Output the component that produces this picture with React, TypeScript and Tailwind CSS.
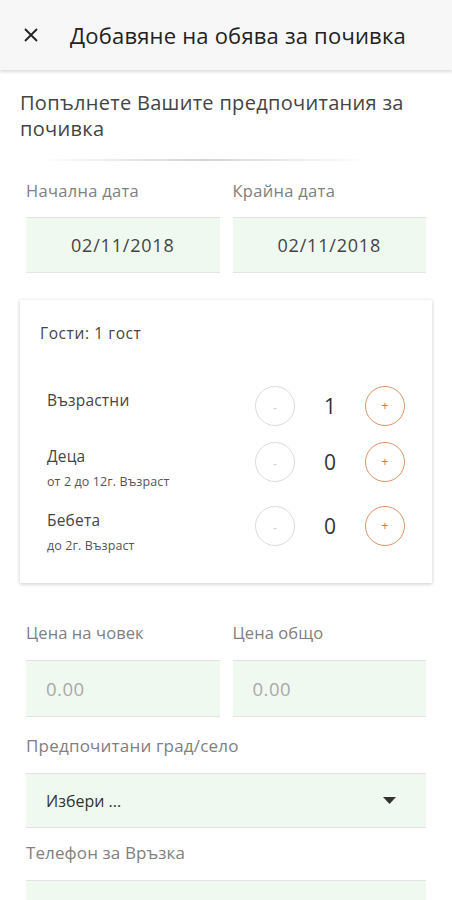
import React from "react";

function Counter({ value }: { value: number }) {
  return (
    <div className="flex items-center">
      <div className="w-[40px] h-[40px] rounded-full border border-[#dcdcdc] flex items-center justify-center text-[11px] text-[#c8c8c8] leading-none">
        -
      </div>
      <div className="w-[70px] text-center text-[21px] text-[#333] leading-none">{value}</div>
      <div className="w-[40px] h-[40px] rounded-full border-[1.5px] border-[#d9956a] flex items-center justify-center text-[12px] text-[#c87a45] leading-none">
        +
      </div>
    </div>
  );
}

function Row({ label, sub, value }: { label: string; sub?: string; value: number }) {
  return (
    <div className="flex items-start justify-between pl-[27px] pr-[27px]">
      <div className="pt-[4px]">
        <div className="text-[15.5px] leading-[20px] text-[#444] tracking-[0.2px]">{label}</div>
        {sub && <div className="mt-[8px] text-[12.5px] leading-[16px] text-[#555] tracking-[0.1px]">{sub}</div>}
      </div>
      <Counter value={value} />
    </div>
  );
}

function Field({ children, className = "" }: { children?: React.ReactNode; className?: string }) {
  return (
    <div
      className={
        "bg-[#f0f9ef] border-t border-b border-t-[#e2e2e2] border-b-[#e4e4e4] flex items-center " +
        className
      }
    >
      {children}
    </div>
  );
}

export default function App() {
  return (
    <div
      className="w-[452px] h-[900px] overflow-hidden bg-white"
      style={{ fontFamily: "'Open Sans', 'Noto Sans', sans-serif" }}
    >
      <header className="h-[70px] bg-[#f7f7f7] shadow-[0_2px_3px_rgba(0,0,0,0.14)] flex items-center pl-[24px] relative z-10">
        <svg width="14" height="14" viewBox="0 0 14 14" className="shrink-0">
          <path d="M1 1L13 13M13 1L1 13" stroke="#222" strokeWidth="1.8" />
        </svg>
        <h1 className="ml-[32px] text-[22px] text-[#222] font-normal tracking-[0.2px] whitespace-nowrap">
          Добавяне на обява за почивка
        </h1>
      </header>

      <p className="mt-[20px] px-[20px] text-[20px] leading-[26px] text-[#444] tracking-[0.3px]">
        Попълнете Вашите предпочитания за почивка
      </p>

      <div className="mt-[17px] ml-[40px] w-[325px] h-[2px] bg-gradient-to-r from-transparent via-[#d4d4d4] to-transparent" />

      <div className="px-[26px]">
        <div className="mt-[19px] grid grid-cols-2 gap-[13px]">
          <div>
            <div className="text-[16.5px] leading-[22px] text-[#808080] tracking-[0.3px]">Начална дата</div>
            <Field className="mt-[15px] h-[56px] justify-center">
              <span className="text-[18px] text-[#444] tracking-[0.8px]">02/11/2018</span>
            </Field>
          </div>
          <div>
            <div className="text-[16.5px] leading-[22px] text-[#808080] tracking-[0.3px]">Крайна дата</div>
            <Field className="mt-[15px] h-[56px] justify-center">
              <span className="text-[18px] text-[#444] tracking-[0.8px]">02/11/2018</span>
            </Field>
          </div>
        </div>
      </div>

      <div className="mt-[27px] mx-[20px] h-[283px] bg-white shadow-[0_1px_4px_rgba(0,0,0,0.22)] pt-[23px]">
        <div className="pl-[20px] text-[15.5px] leading-[20px] text-[#444] tracking-[0.6px]">Гости: 1 гост</div>
        <div className="mt-[43px] flex flex-col gap-[16px]">
          <Row label="Възрастни" value={1} />
          <Row label="Деца" sub="от 2 до 12г. Възраст" value={0} />
          <Row label="Бебета" sub="до 2г. Възраст" value={0} />
        </div>
      </div>

      <div className="px-[26px]">
        <div className="mt-[39px] grid grid-cols-2 gap-[13px]">
          <div>
            <div className="text-[16.5px] leading-[22px] text-[#808080] tracking-[0.1px]">Цена на човек</div>
            <Field className="mt-[16px] h-[57px] pl-[20px]">
              <span className="text-[18.5px] text-[#a8a8a8] tracking-[0.5px]">0.00</span>
            </Field>
          </div>
          <div>
            <div className="text-[16.5px] leading-[22px] text-[#808080] tracking-[0.1px]">Цена общо</div>
            <Field className="mt-[16px] h-[57px] pl-[20px]">
              <span className="text-[18.5px] text-[#a8a8a8] tracking-[0.5px]">0.00</span>
            </Field>
          </div>
        </div>

        <div className="mt-[18px] text-[17px] leading-[22px] text-[#808080] tracking-[0.2px]">Предпочитани град/село</div>
        <Field className="mt-[16px] h-[55px] pl-[20px] pr-[30px] justify-between">
          <span className="text-[16px] text-[#333]">Избери ...</span>
          <svg width="13" height="7" viewBox="0 0 13 7">
            <path d="M0 0H13L6.5 7Z" fill="#333" />
          </svg>
        </Field>

        <div className="mt-[14px] text-[17px] leading-[22px] text-[#808080] tracking-[0.1px]">Телефон за Връзка</div>
        <Field className="mt-[16px] h-[55px]" />
      </div>
    </div>
  );
}
